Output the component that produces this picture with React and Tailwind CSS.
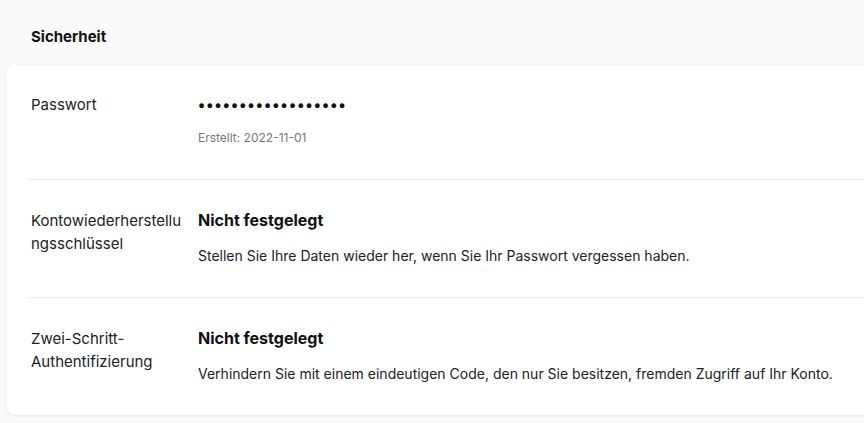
export default function App() {
  const font = { fontFamily: "Inter, 'Noto Sans', sans-serif" };
  return (
    <div className="w-[864px] h-[423px] overflow-hidden bg-[#fafafa] text-[#111]" style={font}>
      <div className="pl-[31px] pt-[28px] h-[65px]">
        <h2 className="text-[15px] font-bold leading-[18px]">Sicherheit</h2>
      </div>
      <div className="ml-[6px] w-[880px] bg-white rounded-[10px] shadow-[0_1px_3px_rgba(0,0,0,0.08)] px-[20px]">
        <div className="flex pl-[5px] pt-[29px] h-[115px] border-b border-[#ececec]">
          <div className="w-[155px] mr-[12px] text-[15px] leading-[22px] text-[#222] break-all">Passwort</div>
          <div>
            <div className="text-[15px] leading-[22px] font-bold tracking-[1.15px]">••••••••••••••••••</div>
            <div className="mt-[14px] text-[12px] leading-[16px] text-[#777]">Erstellt: 2022-11-01</div>
          </div>
        </div>
        <div className="flex pl-[5px] pt-[29px] h-[118px] border-b border-[#ececec]">
          <div className="w-[155px] mr-[12px] text-[15px] leading-[23px] text-[#222] break-all">Kontowiederherstellungsschlüssel</div>
          <div>
            <div className="text-[16px] font-bold leading-[22px]">Nicht festgelegt</div>
            <div className="mt-[15px] text-[14px] leading-[20px] text-[#222]">Stellen Sie Ihre Daten wieder her, wenn Sie Ihr Passwort vergessen haben.</div>
          </div>
        </div>
        <div className="flex pl-[5px] pt-[29px] h-[117px]">
          <div className="w-[155px] mr-[12px] text-[15px] leading-[23px] text-[#222]">Zwei-Schritt-Authentifizierung</div>
          <div>
            <div className="text-[16px] font-bold leading-[22px]">Nicht festgelegt</div>
            <div className="mt-[15px] text-[14px] leading-[20px] text-[#222]">Verhindern Sie mit einem eindeutigen Code, den nur Sie besitzen, fremden Zugriff auf Ihr Konto.</div>
          </div>
        </div>
      </div>
    </div>
  );
}
